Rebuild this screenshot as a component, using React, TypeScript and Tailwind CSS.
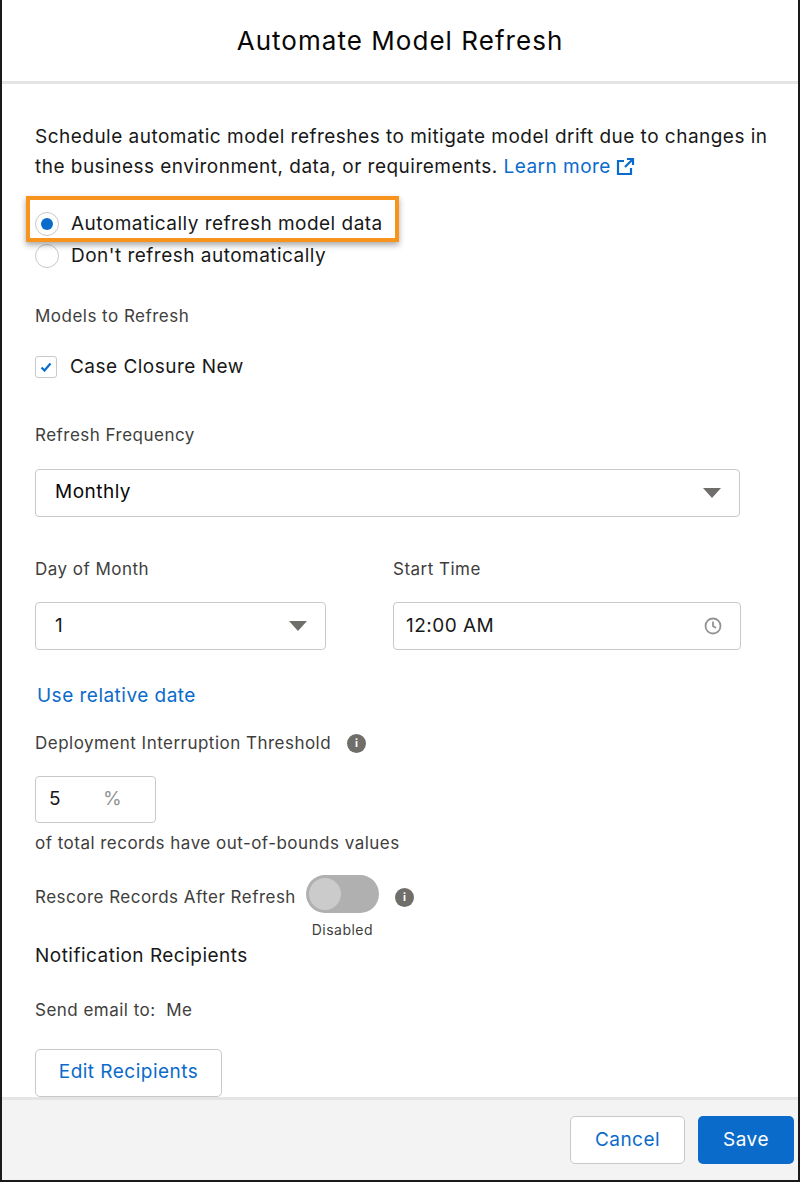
const font = { fontFamily: "Inter, 'Noto Sans', sans-serif", letterSpacing: "0.03em" };

function InfoDot() {
  return (
    <span className="grid h-[19px] w-[19px] place-items-center rounded-full bg-[#706e6b] text-[11px] font-bold leading-none tracking-normal text-white">
      i
    </span>
  );
}

function Caret() {
  return (
    <svg width="18" height="10" viewBox="0 0 18 10">
      <path d="M0 0h18L9 10z" fill="#706e6b" />
    </svg>
  );
}

export default function App() {
  return (
    <div style={font} className="flex h-[1182px] w-[800px] flex-col border-x-2 border-b-2 border-[#1a1a1a] bg-white text-[#181818]">
      <header className="flex h-[86px] items-center justify-center border-b-[3px] border-[#e5e5e5]">
        <h1 className="text-[26px] font-normal tracking-[0.04em] text-[#080707]">Automate Model Refresh</h1>
      </header>

      <main className="flex-1 pl-[33px] pr-[58px] pt-[38px]">
        <p className="mr-[-50px] text-[19px] leading-[30px] text-[#181818]">
          Schedule automatic model refreshes to mitigate model drift due to changes in the business environment, data,
          or requirements.{" "}
          <span className="inline-flex items-center gap-1 text-[#0b6bcb]">
            Learn more
            <svg width="20" height="20" viewBox="0 0 20 20" fill="none" stroke="#0b6bcb" strokeWidth="2.2">
              <path d="M9 4H3v13h13v-6" />
              <path d="M12 2h6v6M18 2l-8 8" />
            </svg>
          </span>
        </p>

        <div className="relative mt-[26px] flex flex-col">
          <div className="pointer-events-none absolute left-[-9px] top-[-12px] h-[46px] w-[373px] border-[4px] border-[#f7941d] shadow-[0_3px_6px_rgba(0,0,0,0.35)]" />
          <label className="flex h-[32px] items-center gap-[12px] text-[19px]">
            <span className="grid h-[24px] w-[24px] place-items-center rounded-full border border-[#c9c9c9]">
              <span className="h-[12px] w-[12px] rounded-full bg-[#0b6bcb]" />
            </span>
            Automatically refresh model data
          </label>
          <label className="flex h-[32px] items-center gap-[12px] text-[19px]">
            <span className="h-[24px] w-[24px] rounded-full border border-[#c9c9c9]" />
            Don't refresh automatically
          </label>
        </div>

        <p className="mt-[32px] text-[17px] text-[#3e3e3c]">Models to Refresh</p>
        <label className="mt-[23px] flex items-center gap-[13px] text-[19px]">
          <span className="grid h-[22px] w-[22px] place-items-center rounded-[3px] border border-[#c9c9c9]">
            <svg width="12" height="10" viewBox="0 0 12 10" fill="none" stroke="#0b6bcb" strokeWidth="2.2">
              <path d="M1.5 5.5l3 3L10.5 1.5" />
            </svg>
          </span>
          Case Closure New
        </label>

        <p className="mt-[42px] text-[17px] text-[#3e3e3c]">Refresh Frequency</p>
        <div className="mt-[20px] flex h-[48px] items-center justify-between rounded-[4px] border border-[#c9c9c9] pl-[19px] pr-[18px] text-[19px] text-[#080707]">
          Monthly
          <Caret />
        </div>

        <div className="mt-[40px] grid grid-cols-[291px_348px] gap-[67px]">
          <div>
            <p className="text-[17px] text-[#3e3e3c]">Day of Month</p>
            <div className="mt-[20px] flex h-[48px] items-center justify-between rounded-[4px] border border-[#c9c9c9] pl-[19px] pr-[18px] text-[19px]">
              1
              <Caret />
            </div>
          </div>
          <div>
            <p className="text-[17px] text-[#3e3e3c]">Start Time</p>
            <div className="mt-[20px] flex h-[48px] items-center justify-between rounded-[4px] border border-[#c9c9c9] pl-[12px] pr-[18px] text-[19px]">
              12:00 AM
              <svg width="18" height="18" viewBox="0 0 18 18" fill="none" stroke="#939393" strokeWidth="1.8">
                <circle cx="9" cy="9" r="7.5" />
                <path d="M9 4.5V9l3 2" />
              </svg>
            </div>
          </div>
        </div>

        <p className="ml-[2px] mt-[32px] text-[19px] text-[#0b6bcb]">Use relative date</p>

        <div className="mt-[20px] flex items-center gap-[16px] text-[17px] text-[#3e3e3c]">
          Deployment Interruption Threshold
          <InfoDot />
        </div>
        <div className="mt-[20px] flex h-[47px] w-[121px] items-center rounded-[4px] border border-[#c9c9c9] pl-[13px] text-[19px]">
          5<span className="ml-[42px] text-[#939393]">%</span>
        </div>
        <p className="mt-[8px] text-[17px] text-[#3e3e3c]">of total records have out-of-bounds values</p>

        <div className="mt-[18px] flex items-start">
          <span className="mt-[10px] text-[17px] text-[#3e3e3c]">Rescore Records After Refresh</span>
          <div className="ml-[10px] flex flex-col items-center">
            <span className="flex h-[38px] w-[73px] items-center rounded-full bg-[#b0b0b0] px-[3px]">
              <span className="h-[32px] w-[32px] rounded-full bg-[#cbcbcb]" />
            </span>
            <span className="mt-[6px] text-[14px] text-[#3e3e3c]">Disabled</span>
          </div>
          <span className="ml-[16px] mt-[13px]">
            <InfoDot />
          </span>
        </div>

        <p className="mt-[2px] text-[19px] text-[#181818]">Notification Recipients</p>
        <p className="mt-[28px] text-[17px] text-[#3e3e3c]">Send email to:&nbsp; Me</p>
        <button className="mt-[25px] h-[48px] w-[187px] rounded-[5px] border border-[#c9c9c9] text-[19px] text-[#0b6bcb]">
          Edit Recipients
        </button>
      </main>

      <footer className="flex h-[85px] items-center justify-end gap-[13px] border-t-[3px] border-[#e5e5e5] bg-[#f3f3f3] pr-[4px]">
        <button className="h-[48px] w-[115px] rounded-[5px] border border-[#c9c9c9] bg-white text-[19px] text-[#0b6bcb]">
          Cancel
        </button>
        <button className="h-[48px] w-[96px] rounded-[5px] bg-[#0b6bcb] text-[19px] text-white">Save</button>
      </footer>
    </div>
  );
}
